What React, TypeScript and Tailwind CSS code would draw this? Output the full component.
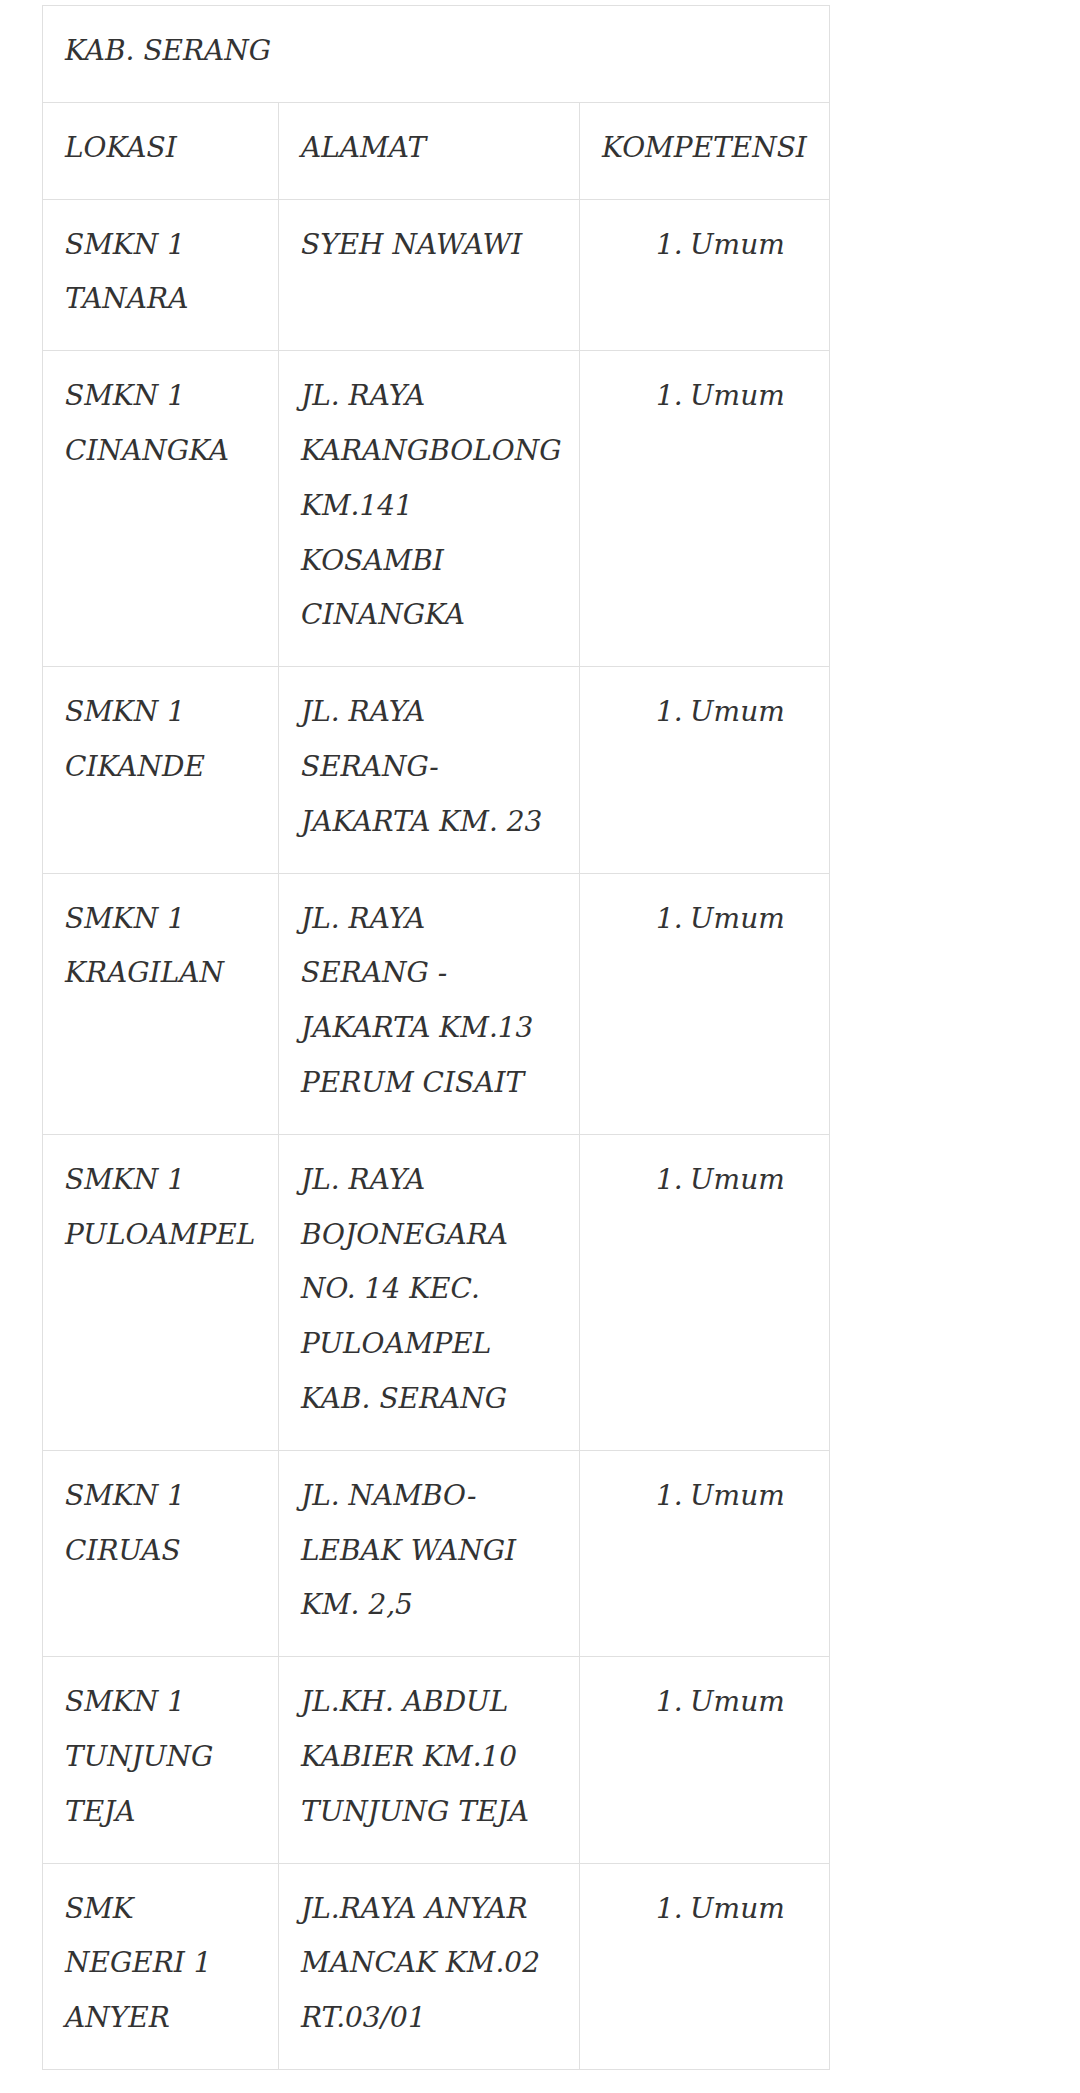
const rows: { lokasi: string[]; alamat: string[] }[] = [
  { lokasi: ["SMKN 1", "TANARA"], alamat: ["SYEH NAWAWI"] },
  { lokasi: ["SMKN 1", "CINANGKA"], alamat: ["JL. RAYA", "KARANGBOLONG", "KM.141", "KOSAMBI", "CINANGKA"] },
  { lokasi: ["SMKN 1", "CIKANDE"], alamat: ["JL. RAYA", "SERANG-", "JAKARTA KM. 23"] },
  { lokasi: ["SMKN 1", "KRAGILAN"], alamat: ["JL. RAYA", "SERANG -", "JAKARTA KM.13", "PERUM CISAIT"] },
  { lokasi: ["SMKN 1", "PULOAMPEL"], alamat: ["JL. RAYA", "BOJONEGARA", "NO. 14 KEC.", "PULOAMPEL", "KAB. SERANG"] },
  { lokasi: ["SMKN 1", "CIRUAS"], alamat: ["JL. NAMBO-", "LEBAK WANGI", "KM. 2,5"] },
  { lokasi: ["SMKN 1", "TUNJUNG", "TEJA"], alamat: ["JL.KH. ABDUL", "KABIER KM.10", "TUNJUNG TEJA"] },
  { lokasi: ["SMK", "NEGERI 1", "ANYER"], alamat: ["JL.RAYA ANYAR", "MANCAK KM.02", "RT.03/01"] },
];

const cell = "border border-[#e0e0e0] px-[22px] pt-[18px] pb-[23px] align-top";

function Lines({ items }: { items: string[] }) {
  return (
    <>
      {items.map((t, i) => (
        <div key={i} className="whitespace-nowrap">{t}</div>
      ))}
    </>
  );
}

export default function App() {
  return (
    <div className="min-h-[2093px] bg-white pl-[42px] pt-[5px]">
      <table
        className="w-[787px] border-collapse table-fixed text-[28px] leading-[54.8px] italic text-[#333]"
        style={{ fontFamily: '"DejaVu Serif", serif' }}
      >
        <colgroup>
          <col className="w-[236px]" />
          <col className="w-[301px]" />
          <col className="w-[250px]" />
        </colgroup>
        <tbody>
          <tr>
            <td colSpan={3} className={cell}>KAB. SERANG</td>
          </tr>
          <tr>
            <td className={cell}>LOKASI</td>
            <td className={cell}>ALAMAT</td>
            <td className={cell}>KOMPETENSI</td>
          </tr>
          {rows.map((r, i) => (
            <tr key={i}>
              <td className={cell}><Lines items={r.lokasi} /></td>
              <td className={cell}><Lines items={r.alamat} /></td>
              <td className={cell}>
                <div className="flex pl-[54px]">
                  <span className="w-[34px]">1.</span>
                  <span>Umum</span>
                </div>
              </td>
            </tr>
          ))}
        </tbody>
      </table>
    </div>
  );
}
